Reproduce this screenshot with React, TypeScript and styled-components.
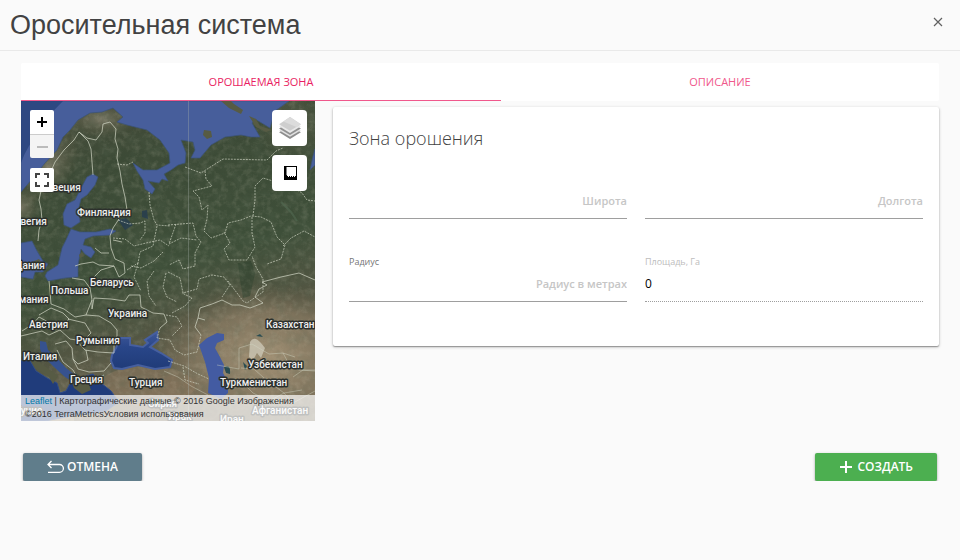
import React from "react";
import styled, { createGlobalStyle, css } from "styled-components";

const GlobalStyle = createGlobalStyle`
  * { box-sizing: border-box; }
  body {
    margin: 0;
    background: #fafafa;
    color: #000;
    font: 12px/16px "Open Sans", "Noto Sans", sans-serif;
  }
  button, input { font: inherit; color: inherit; }
`;

const Header = styled.header`
  display: flex;
  justify-content: space-between;
  align-items: center;
  height: 51px;
  padding: 0 14px 0 10px;
  border-bottom: 1px solid #e9e9e9;
`;

const Title = styled.h1`
  margin: 0;
  font: 400 27px/32px "Liberation Sans", Arial, sans-serif;
  color: #424242;
`;

const CloseButton = styled.button`
  display: grid;
  place-items: center;
  width: 16px;
  height: 16px;
  margin-bottom: 6px;
  padding: 0;
  border: 0;
  background: none;
  cursor: pointer;
`;

const Content = styled.main`
  padding: 12px 21px 0;
`;

const TabList = styled.div`
  display: flex;
  height: 38px;
  background: #fff;
  border-radius: 2px;
`;

const Tab = styled.button<{ $active?: boolean }>`
  flex: ${(p) => (p.$active ? "480 1 0" : "438 1 0")};
  padding: 0;
  border: 0;
  border-bottom: 1px solid ${(p) => (p.$active ? "#f0588c" : "transparent")};
  background: none;
  color: ${(p) => (p.$active ? "#e91e63" : "#f0588c")};
  font-size: 11px;
  font-weight: 400;
  text-transform: uppercase;
  cursor: pointer;
`;

const Panel = styled.section`
  display: grid;
  grid-template-columns: minmax(0, 294fr) minmax(0, 606fr);
  column-gap: 18px;
  align-items: start;
`;

const MapBox = styled.div`
  position: relative;
  height: 320px;
  overflow: hidden;
  background: #3b4b37;
`;

const MapDrawing = styled.svg`
  display: block;
  width: 100%;
  height: 100%;
`;

const MapTools = styled.div<{ $side: "left" | "right" }>`
  position: absolute;
  top: 9px;
  ${(p) =>
    p.$side === "left"
      ? css`left: 9px; gap: 10px;`
      : css`right: 8px; gap: 9px;`}
  display: flex;
  flex-direction: column;
`;

const ZoomGroup = styled.div`
  display: flex;
  flex-direction: column;
  border-radius: 2px;
  overflow: hidden;
`;

const SmallTool = styled.button`
  display: grid;
  place-items: center;
  width: 24px;
  height: 24px;
  padding: 0;
  border: 0;
  border-radius: 2px;
  background: #fff;
  color: #000;
  cursor: pointer;

  ${ZoomGroup} & { border-radius: 0; }
  ${ZoomGroup} & + & { border-top: 1px solid #ccc; }
  &:disabled { background: #f4f4f4; color: #bbb; cursor: default; }
`;

const LargeTool = styled(SmallTool)`
  width: 35px;
  height: 36px;
  border-radius: 4px;
`;

const Attribution = styled.div`
  position: absolute;
  left: 0;
  right: 0;
  bottom: 0;
  padding: 0 4px;
  background: rgba(255, 255, 255, 0.7);
  color: #333;
  font: 9px/13px "Liberation Sans", Arial, sans-serif;
  a { color: #0078a8; text-decoration: none; }
`;

const Card = styled.form`
  margin-top: 6px;
  padding: 19px 16px 44px;
  border-radius: 2px;
  background: #fff;
  box-shadow: 0 1px 3px rgba(0, 0, 0, 0.3), 0 1px 1px rgba(0, 0, 0, 0.26);
`;

const CardTitle = styled.h2`
  margin: 0 0 37px;
  font-size: 18px;
  font-weight: 300;
  line-height: 24px;
  color: #424242;
`;

const Fields = styled.div`
  display: grid;
  grid-template-columns: 1fr 1fr;
  gap: 35px 18px;
`;

const Field = styled.label<{ $faded?: boolean }>`
  display: flex;
  flex-direction: column;
  font-size: 9px;
  line-height: 16px;
  color: ${(p) => (p.$faded ? "#bdbdbd" : "#757575")};
`;

const TextInput = styled.input`
  width: 100%;
  height: 32px;
  padding: 0 0 4px;
  border: 0;
  border-bottom: 1px solid #9e9e9e;
  border-radius: 0;
  background: none;
  outline: 0;
  color: #000;
  font-size: 12px;
  text-align: right;
  &::placeholder { color: #c6c6c6; font-size: 11px; font-weight: 600; opacity: 1; }
  &:disabled { border-bottom: 1px dotted #9e9e9e; text-align: left; }
`;

const Footer = styled.footer`
  display: flex;
  justify-content: space-between;
  padding: 32px 23px 0;
`;

const ActionButton = styled.button<{ $kind: "cancel" | "create" }>`
  display: flex;
  align-items: center;
  justify-content: center;
  gap: ${(p) => (p.$kind === "cancel" ? 3 : 5)}px;
  height: 28px;
  padding: 0 24px;
  border: 0;
  border-radius: 2px;
  background: ${(p) => (p.$kind === "cancel" ? "#607d8b" : "#4caf50")};
  box-shadow: 0 1px 3px rgba(0, 0, 0, 0.3), 0 1px 1px rgba(0, 0, 0, 0.2);
  color: #fff;
  font-size: 12px;
  font-weight: 600;
  text-transform: uppercase;
  cursor: pointer;
`;

const northSeas = [
  "M0 91L12 77L24 62L36 49L42 36L49 29L57 19L69 12L81 11L92 7L102 16L96 21L106 24L126 29L139 39L148 52L149 62L136 69L122 69L112 62L116 70L122 79L124 88L131 93L134 88L127 80L138 82L141 78L147 80L143 73L150 69L157 64L164 62L165 52L160 39L172 41L174 49L170 57L179 57L190 44L204 36L220 34L230 36L239 36L231 22L234 18L249 27L254 10L268 0L0 0Z",
  "M72 73L77 76L74 84L66 94L60 98L58 106L59 121L50 127L43 124L42 113L46 103L54 99L59 89L66 76Z",
  "M50 128L59 131L75 131L89 128L95 130L89 134L72 135L64 138L62 144L70 146L74 151L70 157L64 153L60 148L57 164L57 176L44 177L27 180L24 175L26 171L37 164L41 147L45 139Z",
  "M0 142L11 140L16 150L22 160L27 163L22 171L14 171L12 178L0 176Z",
  "M292 55L294 48L294 64L289 69Z",
];
const blackSea =
  "M91 254L95 247L99 237L109 237L109 244L122 246L127 242L124 239L136 231L137 239L129 246L140 252L151 259L149 266L134 268L117 264L101 268L93 267L90 260Z";
const adriatic = "M19 240L25 241L27 249L35 256L45 267L54 274L52 281L44 276L33 266L22 255L19 248Z";
const mediterranean =
  "M0 260L8 258L15 270L26 277L36 282L39 292L45 290L52 277L61 292L59 277L72 273L80 282L90 290L98 301L85 310L50 315L24 320L0 320Z";
const caspian =
  "M178 244L186 237L196 232L203 233L203 239L196 242L194 247L199 256L203 264L202 272L207 281L207 292L200 298L187 292L188 277L184 261Z";

const fineBorders = [
  "M17 140L18 129L21 119L20 108L18 99L20 90L28 75L34 61L43 49L53 39L58 31L66 37L75 39L81 31L82 23L89 21L95 28L94 38L97 48L96 57L99 70L101 83L104 96L106 109L98 118L92 127L89 135",
  "M58 31L67 40L70 48L71 61L72 74",
  "M89 135L90 147L94 158L103 162L104 172L98 176L93 165L78 164L72 161L60 163L54 165",
  "M74 147L80 152L88 152M92 139L101 141",
  "M28 180L29 190L30 203L43 208L54 216L65 214L71 199L69 187L63 179L51 177M69 187L73 176L80 169L93 165",
  "M18 214L30 207L42 212L48 218L41 226L29 222L18 216L12 223L1 230M47 218L64 222L70 232L62 240L49 238L39 229L28 234L21 230L0 235",
  "M65 214L78 215L90 222L96 229L96 235L93 240L93 252L77 251L64 249L55 239M71 199L71 208L73 197L90 198L104 200L108 194L119 194L120 206L132 212L143 213L146 221L139 227",
  "M34 243L45 240L51 247L52 258L57 268L68 271L83 270L90 262M36 249L42 261L52 269L56 276L68 280L83 274M52 258L57 263L67 259L65 249",
  "M184 219L177 217L179 207L191 203L201 199L211 204L219 204L229 207L242 202L234 196L238 188L246 184L241 181L260 176L278 172L294 179",
  "M177 217L174 226L180 234",
];
const dashedBorders = [
  "M96 63L106 64L112 61M128 91L129 104L133 119L136 124L149 125",
  "M97 119L108 123L119 122L124 120L124 132L119 139",
  "M92 137L104 138L113 145L125 142L139 139L148 145",
  "M136 125L132 145L119 151L117 162L106 169",
  "M164 66L180 72L202 58L246 59L255 50L262 47",
  "M184 70L185 78L191 85L172 90L178 96L181 109L187 104L186 118L183 130L190 137L204 132L207 122L220 119L230 115L240 116L250 121L256 136L264 144L260 158L246 163",
  "M232 115L234 99L234 85L242 77L252 80L263 69M262 145L270 137L283 130L294 136",
  "M263 67L270 85L281 92L286 99L294 100",
  "M147 124L172 122L175 135L180 141L174 152L174 165L162 168L158 159L148 164",
  "M155 123L148 143L160 137L176 139",
  "M231 116L231 132L234 146L226 159L208 159L203 148L209 142L203 131",
  "M147 171L159 177L162 192L176 188L178 178L191 174L203 176L209 184L201 196",
  "M207 180L222 200L226 202L242 191L242 178L235 166L231 155",
  "M133 170L126 180L128 195L135 205M145 172L142 186L146 196L156 201",
  "M110 165L120 167L133 160L142 151M117 162L113 176L120 190",
  "M139 227L136 237L149 239L154 249L163 254L176 251L180 234",
  "M145 214L156 216L161 225L151 235M151 212L164 205L171 197L161 192",
  "M147 260L163 265L177 273L188 278M162 266L164 279L178 283",
];
const southBorders = [
  "M196 264L218 268L218 247L231 243L248 253L262 252L269 265L278 269L294 270",
  "M220 267L233 268L243 277L263 292L281 289M262 252L274 256",
  "M205 285L221 281L232 292L248 300L263 292L272 302L294 290M272 276L282 269L294 269",
  "M143 270L157 276L170 285L187 294",
];

const mapLabels: [string, number, number][] = [
  ["Швеция", 22, 90], ["Финляндия", 56, 115], ["Норвегия", -19, 124],
  ["Дания", -6, 168], ["Польша", 30, 193], ["Беларусь", 69, 185],
  ["Германия", -18, 202], ["Украина", 87, 216], ["Австрия", 8, 227],
  ["Румыния", 55, 243], ["Италия", 2, 259], ["Греция", 49, 282],
  ["Турция", 108, 285], ["Казахстан", 245, 227], ["Узбекистан", 227, 267],
  ["Туркменистан", 199, 285], ["Афганистан", 231, 313], ["Иран", 199, 322],
  ["Тунис", -6, 313], ["Сирия", 127, 306], ["Ирак", 147, 319],
];

function SatelliteMap() {
  return (
    <MapDrawing viewBox="0 0 294 320" preserveAspectRatio="xMidYMid slice" aria-hidden="true">
      <defs>
        <linearGradient id="land" x1="0" y1="0" x2="0.25" y2="1">
          <stop offset="0" stopColor="#4a4d3c" />
          <stop offset="0.25" stopColor="#3c4a36" />
          <stop offset="0.6" stopColor="#3e4f39" />
          <stop offset="0.8" stopColor="#545643" />
          <stop offset="1" stopColor="#7d715c" />
        </linearGradient>
        <radialGradient id="steppe">
          <stop offset="0" stopColor="#a29175" />
          <stop offset="0.65" stopColor="#80745d" stopOpacity="0.9" />
          <stop offset="1" stopColor="#655e49" stopOpacity="0" />
        </radialGradient>
        <linearGradient id="deepSea" x1="0" y1="0" x2="0" y2="1">
          <stop offset="0" stopColor="#3f5899" />
          <stop offset="0.4" stopColor="#294689" />
          <stop offset="1" stopColor="#203b78" />
        </linearGradient>
        <radialGradient id="tundra">
          <stop offset="0" stopColor="#777563" />
          <stop offset="1" stopColor="#595942" stopOpacity="0" />
        </radialGradient>
        <filter id="terrain" x="0" y="0" width="100%" height="100%">
          <feTurbulence type="fractalNoise" baseFrequency="0.09" numOctaves="5" seed="8" />
          <feColorMatrix values="0 0 0 0 0.10  0 0 0 0 0.14  0 0 0 0 0.09  1.8 0 0 0 -0.7" />
        </filter>
        <filter id="relief" x="0" y="0" width="100%" height="100%">
          <feTurbulence type="fractalNoise" baseFrequency="0.16" numOctaves="4" seed="3" />
          <feColorMatrix values="0 0 0 0 0.75  0 0 0 0 0.70  0 0 0 0 0.55  0 1.5 0 0 -0.65" />
        </filter>
      </defs>
      <rect width="294" height="320" fill="url(#land)" />
      <ellipse cx="243" cy="258" rx="112" ry="76" fill="url(#steppe)" />
      <ellipse cx="28" cy="66" rx="24" ry="44" transform="rotate(34 28 66)" fill="url(#tundra)" />
      <ellipse cx="80" cy="18" rx="38" ry="18" fill="url(#tundra)" />
      <ellipse cx="0" cy="106" rx="20" ry="20" fill="url(#tundra)" />
      <ellipse cx="272" cy="24" rx="38" ry="40" fill="url(#tundra)" opacity="0.5" />
      <ellipse cx="126" cy="285" rx="48" ry="20" fill="#8d785d" opacity="0.5" />
      <path d="M0 294L54 291L53 320L0 320Z" fill="#b09a78" opacity="0.6" />
      <path d="M217 162L230 160L234 172L229 195L222 197L219 178Z" fill="#2c402b" opacity="0.5" />
      <rect width="294" height="320" filter="url(#terrain)" opacity="0.28" />
      <rect width="294" height="320" filter="url(#relief)" opacity="0.2" />
      <g fill="#475e9b" stroke="#3b5379" strokeWidth="0.7">
        {northSeas.map((d) => <path key={d} d={d} />)}
      </g>
      <path d={blackSea} fill="url(#deepSea)" stroke="#465f9f" strokeWidth="2" />
      <path d={adriatic} fill="#36528f" />
      <path d={mediterranean} fill="#203c7b" stroke="#304c88" />
      <path d={caspian} fill="#435ba2" />
      <path d="M0 0H42Q25 16 18 34Q7 42 0 62Z" fill="#243e78" opacity="0.7" />
      <g fill="#575b44">
        <path d="M200 0L208 7L220 13L222 9L213 3L210 0Z" />
        <path d="M183 29L190 30L191 36L186 38L182 34Z" />
        <path d="M228 15L235 18L239 25L251 29L245 31L235 26Z" />
        <path d="M11 161L18 158L22 164L16 167Z" />
        <path d="M58 154L61 151L63 155L59 157Z" />
        <path d="M49 277L57 273L66 278L70 289L61 293L53 287Z" />
        <path d="M7 255L14 258L25 266L37 275L32 283L28 276L14 267Z" />
      </g>
      <path d="M229 241Q233 234 240 242L244 247L240 257L236 252L232 259L228 256Z" fill="#ccc7b5" opacity="0.8" />
      <path d="M235 235L242 236L239 233ZM222 261L226 265L224 269ZM203 266Q210 263 209 273L205 272Z" fill="#2b4c51" />
      <path d="M97 119L105 117L112 124L104 129ZM121 110L126 109L127 118L121 116Z" fill="#263c50" opacity="0.8" />
      <path d="M260 101L270 111L276 120" fill="none" stroke="#526952" strokeWidth="2" opacity="0.6" />
      <g fill="none" stroke="#d4d9c8" strokeWidth="1" strokeLinejoin="round">
        {fineBorders.map((d) => <path key={d} d={d} opacity="0.7" />)}
        {dashedBorders.map((d) => <path key={d} d={d} strokeDasharray="2 1" opacity="0.65" />)}
        {southBorders.map((d) => <path key={d} d={d} opacity="0.4" />)}
      </g>
      <path d="M167.500 0V320" stroke="#a7b0aa" opacity="0.35" />
      <g fontFamily="Roboto, sans-serif" fontSize="10" fontWeight="500" fill="#eee" stroke="#2c302c" strokeWidth="3" strokeLinejoin="round" paintOrder="stroke">
        {mapLabels.map(([name, x, y]) => <text key={name} x={x} y={y}>{name}</text>)}
      </g>
    </MapDrawing>
  );
}

const LayersIcon = () => (
  <svg width="24" height="24" viewBox="0 0 22 22" aria-hidden="true">
    <path d="M1 15L11 9L21 15L11 21Z" fill="#8e8e8e" />
    <path d="M1 13L11 7L21 13L11 19Z" fill="#e1e1e1" />
    <path d="M1 11.500L11 5L21 11.500L11 17.500Z" fill="#929292" />
    <path d="M1 9.500L11 3L21 9.500L11 15.500Z" fill="#e8e8e8" />
    <path d="M1 7.500L11 1L21 7.500L11 13.500Z" fill="#cecece" />
    <path d="M5 5L11 1L21 7.500L17 10Z" fill="#dcdcdc" />
  </svg>
);

const MeasureIcon = () => (
  <svg width="14" height="14" viewBox="0 0 14 14" aria-hidden="true">
    <path d="M1 0H14V14H1Z" />
    <path d="M4 1H13V10H4Z" fill="#fff" />
    <path d="M3 2H4M3 4H4M3 6H4M3 8H4M5 10.500H6M7 10.500H8M9 10.500H10M11 10.500H12" stroke="#fff" />
  </svg>
);

export default function App() {
  return (
    <>
      <GlobalStyle />
      <Header>
        <Title>Оросительная система</Title>
        <CloseButton type="button" aria-label="Закрыть">
          <svg width="10" height="10" viewBox="0 0 10 10" fill="none" stroke="#616161" strokeWidth="1.200" aria-hidden="true">
            <path d="M1 1L9 9M9 1L1 9" />
          </svg>
        </CloseButton>
      </Header>
      <Content>
        <TabList role="tablist">
          <Tab type="button" role="tab" aria-selected="true" $active>Орошаемая зона</Tab>
          <Tab type="button" role="tab" aria-selected="false">Описание</Tab>
        </TabList>
        <Panel role="tabpanel">
          <MapBox>
            <SatelliteMap />
            <MapTools $side="left">
              <ZoomGroup>
                <SmallTool type="button" aria-label="Приблизить">
                  <svg width="12" height="12" viewBox="0 0 12 12" stroke="currentColor" strokeWidth="2" aria-hidden="true"><path d="M6 1V11M1 6H11" /></svg>
                </SmallTool>
                <SmallTool type="button" aria-label="Отдалить" disabled>
                  <svg width="12" height="12" viewBox="0 0 12 12" stroke="currentColor" strokeWidth="2" aria-hidden="true"><path d="M1 6H12" /></svg>
                </SmallTool>
              </ZoomGroup>
              <SmallTool type="button" aria-label="На весь экран">
                <svg width="14" height="14" viewBox="0 0 14 14" fill="none" stroke="#444" strokeWidth="2" aria-hidden="true">
                  <path d="M1 5V1H5M9 1H13V5M13 9V13H9M5 13H1V9" />
                </svg>
              </SmallTool>
            </MapTools>
            <MapTools $side="right">
              <LargeTool type="button" aria-label="Слои"><LayersIcon /></LargeTool>
              <LargeTool type="button" aria-label="Измерить"><MeasureIcon /></LargeTool>
            </MapTools>
            <Attribution>
              <a href="#leaflet">Leaflet</a> | Картографические данные © 2016 Google Изображения ©2016 TerraMetricsУсловия использования
            </Attribution>
          </MapBox>
          <Card>
            <CardTitle>Зона орошения</CardTitle>
            <Fields>
              <Field><TextInput aria-label="Широта" placeholder="Широта" /></Field>
              <Field><TextInput aria-label="Долгота" placeholder="Долгота" /></Field>
              <Field>Радиус<TextInput placeholder="Радиус в метрах" /></Field>
              <Field $faded>Площадь, Га<TextInput defaultValue="0" disabled /></Field>
            </Fields>
          </Card>
        </Panel>
      </Content>
      <Footer>
        <ActionButton type="button" $kind="cancel">
          <svg width="17" height="14" viewBox="0 0 17 14" fill="none" stroke="currentColor" strokeWidth="1.300" aria-hidden="true">
            <path d="M4.500 1L1 4.500L4.500 8M1 4.500H12.500A3.800 3.800 0 0 1 12.500 12.300H1" />
          </svg>
          Отмена
        </ActionButton>
        <ActionButton type="button" $kind="create">
          <svg width="14" height="14" viewBox="0 0 14 14" stroke="currentColor" strokeWidth="2" aria-hidden="true"><path d="M7 1V13M1 7H13" /></svg>
          Создать
        </ActionButton>
      </Footer>
    </>
  );
}
